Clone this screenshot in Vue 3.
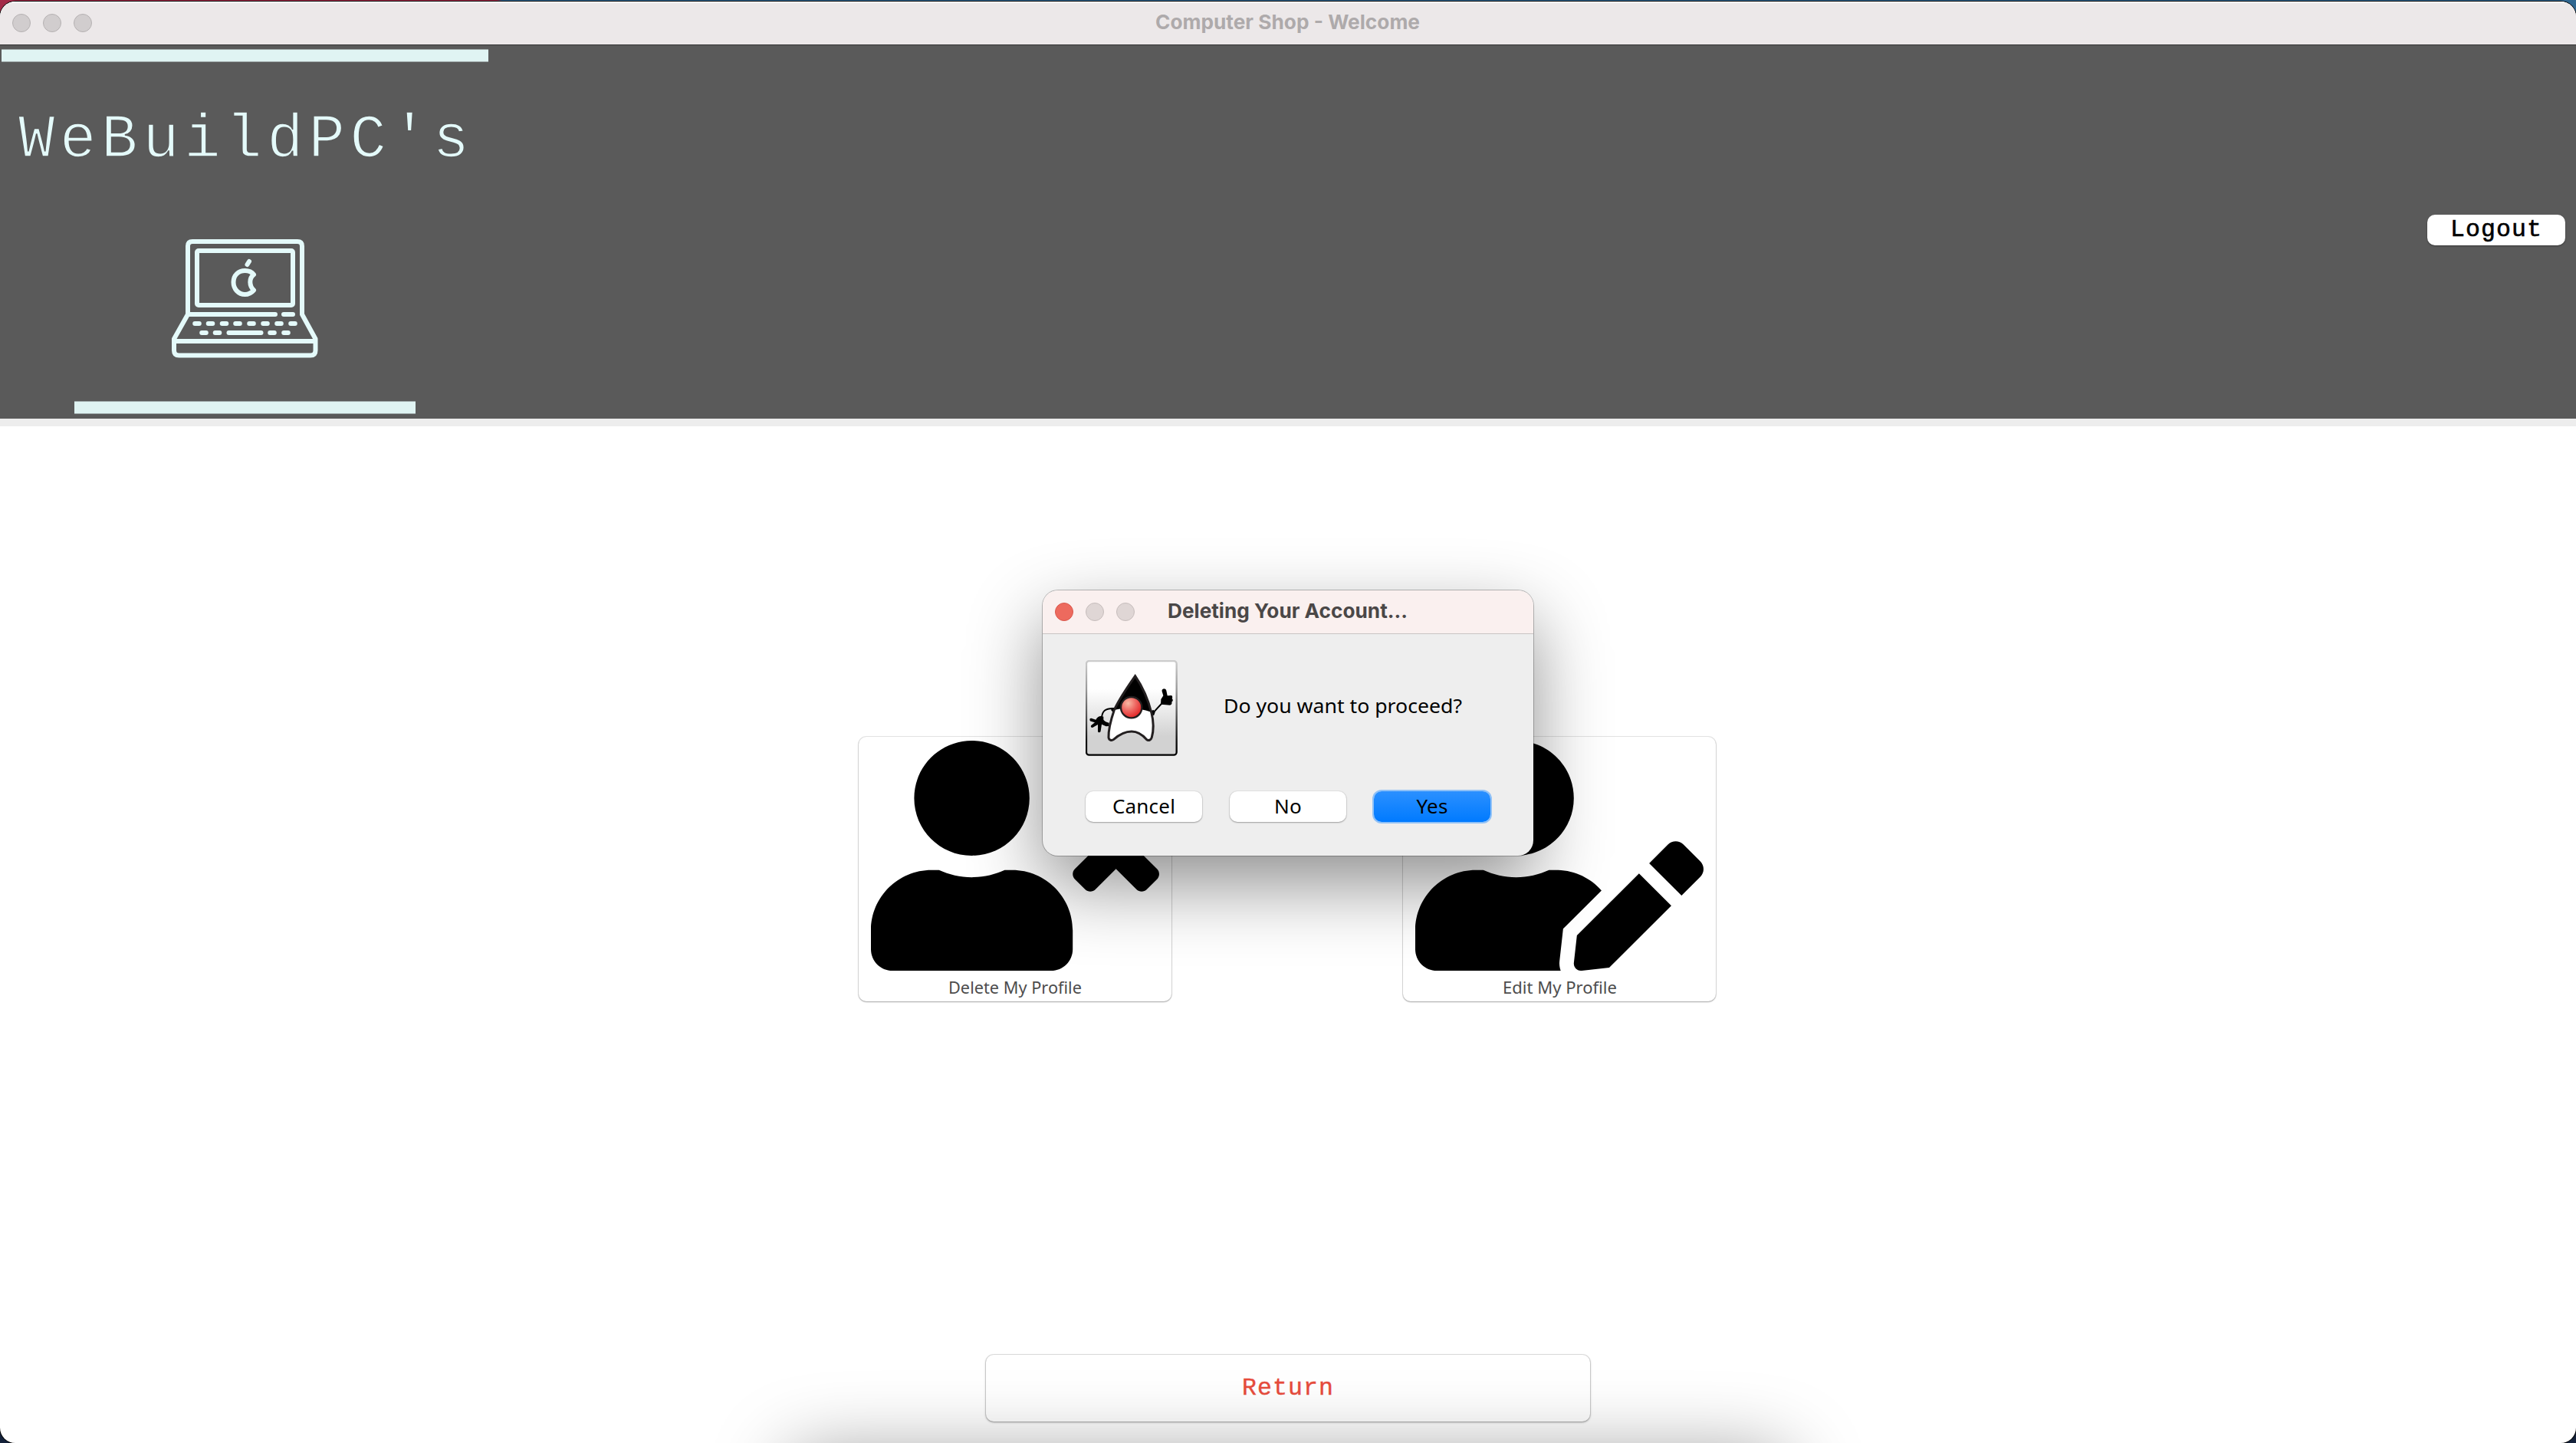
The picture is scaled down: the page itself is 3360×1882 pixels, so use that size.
<script setup>
const keysA = [257, 274.5, 292.5, 310, 328, 346, 364, 382]
const keysB = [266, 283.5, 355, 373]
const person = 'M224 256c70.7 0 128-57.3 128-128S294.7 0 224 0 96 57.3 96 128s57.3 128 128 128z'
const cards = [
  {
    label: 'Delete My Profile',
    width: 174,
    path: person + 'm89.6 32h-16.7c-22.2 10.2-46.9 16-72.9 16s-50.6-5.8-72.9-16h-16.7C60.2 288 0 348.2 0 422.4V464c0 26.5 21.5 48 48 48h352c26.5 0 48-21.5 48-48v-41.6c0-74.2-60.2-134.4-134.4-134.4zM589.6 240l45.6 45.6c6.3 6.3 6.3 16.5 0 22.8l-22.8 22.8c-6.3 6.3-16.5 6.3-22.8 0L544 285.6l-45.6 45.6c-6.3 6.3-16.5 6.3-22.8 0l-22.8-22.8c-6.3-6.3-6.3-16.5 0-22.8l45.6-45.6-45.6-45.6c-6.3-6.3-6.3-16.5 0-22.8l22.8-22.8c6.3-6.3 16.5-6.3 22.8 0l45.6 45.6 45.6-45.6c6.3-6.3 16.5-6.3 22.8 0l22.8 22.8c6.3 6.3 6.3 16.5 0 22.8z'
  },
  {
    label: 'Edit My Profile',
    width: 149,
    path: person + 'm89.6 32h-16.7c-22.2 10.2-46.9 16-72.9 16s-50.6-5.8-72.9-16h-16.7C60.2 288 0 348.2 0 422.4V464c0 26.5 21.5 48 48 48h274.9c-2.4-6.8-3.4-14-2.6-21.3l6.8-60.9 1.2-11.1 7.9-7.9 77.3-77.3c-24.5-27.7-60-45.5-99.9-45.5zm45.3 145.3l-6.8 61c-1.1 10.2 7.5 18.8 17.6 17.6l60.9-6.8 137.9-137.9-71.7-71.7-137.9 137.8zM633 268.9L595.1 231c-9.3-9.3-24.5-9.3-33.8 0l-37.8 37.8-4.1 4.1 71.8 71.7 41.8-41.8c9.3-9.4 9.3-24.5 0-33.9z'
  }
]
</script>

<template>
  <div class="desktop">
    <div class="window">
      <div class="titlebar main-title">
        <div class="lights"><i></i><i></i><i></i></div>
        <svg class="fit" width="346" height="40"><text x="0" y="27" textLength="345" lengthAdjust="spacingAndGlyphs">Computer Shop - Welcome</text></svg>
      </div>
      <header class="banner">
        <svg class="logo" width="640" height="488" viewBox="0 59 640 488">
          <rect x="2" y="64.5" width="635" height="16" fill="#e0f4f3" />
          <rect x="97" y="523.5" width="445" height="16" fill="#e0f4f3" />
          <text class="brand" x="24" y="204" textLength="588" lengthAdjust="spacing">WeBuildPC's</text>
          <g fill="none" stroke="#e4fafa" stroke-width="6" stroke-linecap="round" stroke-linejoin="round">
            <path d="M245 410V321Q245 315 251 315H388Q394 315 394 321V410L411.500 442V457Q411.500 463.500 405 463.500H233.500Q227 463.500 227 457V442Z" stroke-linecap="butt" />
            <rect x="257" y="327" width="125" height="71" rx="2" />
            <path d="M245 410H359M370 410H382M228 445H411M298.500 434H340.500" />
            <path v-for="x in keysA" :key="'a' + x" :d="`M${x - 2.800} 422h5.600`" />
            <path v-for="x in keysB" :key="'b' + x" :d="`M${x - 2.800} 434h5.600`" />
            <path d="M331 358C328 354 324 353 319.500 353C311 353 304.500 359 304.500 368C304.500 377 311 384 319.500 384C324 384 328 382 331 378.500C325 373 324.500 363 331 358Z" />
            <path d="M325 341L322.500 345" />
          </g>
        </svg>
        <button class="logout">Logout</button>
      </header>
      <div class="strip"></div>
      <main class="content">
        <div class="cards">
          <div v-for="c in cards" :key="c.label" class="card">
            <svg class="glyph" width="376" height="300" viewBox="0 0 640 512" preserveAspectRatio="none"><path :d="c.path" /></svg>
            <svg class="fit label" :width="c.width" height="32"><text x="0" y="27" :textLength="c.width" lengthAdjust="spacingAndGlyphs">{{ c.label }}</text></svg>
          </div>
        </div>
        <button class="return">Return</button>
      </main>
      <div class="bottom-shade"><div></div></div>

      <section class="dialog">
        <div class="titlebar dialog-title">
          <div class="lights"><i class="close"></i><i></i><i></i></div>
          <svg class="fit" width="314" height="40"><text x="0" y="27" textLength="313" lengthAdjust="spacingAndGlyphs">Deleting Your Account...</text></svg>
        </div>
        <div class="dialog-body">
          <div class="message">
            <svg class="duke" width="120" height="126" viewBox="48 63 360 378">
              <defs>
                <linearGradient id="tile" x1="0" y1="0" x2="0" y2="1"><stop offset=".3" stop-color="#fff" /><stop offset=".8" stop-color="#d2d2d2" /></linearGradient>
                <linearGradient id="rim" x1="0" y1="0" x2="0" y2="1"><stop offset="0" stop-color="#ccc" /><stop offset=".3" stop-color="#999" /><stop offset=".85" stop-color="#111" /><stop offset="1" stop-color="#000" /></linearGradient>
                <radialGradient id="nose" cx=".35" cy=".3" r=".75"><stop offset="0" stop-color="#f8b9a4" /><stop offset=".5" stop-color="#ee6560" /><stop offset="1" stop-color="#e01f20" /></radialGradient>
              </defs>
              <rect x="51" y="66" width="353" height="368" rx="11" fill="url(#tile)" stroke="url(#rim)" stroke-width="7" />
              <path d="M157 252C125 251 112 262 111 290M313 268L350 228" fill="none" stroke="#000" stroke-width="6" />
              <path d="M148 249h14l-4 22-10-12zM300 262l14-4 6 8-4 12-12 4z" />
              <path d="M118 284C105 278 94 284 88 296L70 290C63 289 62 300 69 302L84 307L70 318C65 324 73 330 79 325L96 315L96 341C97 348 107 347 107 340L111 314L128 322L140 321V308C128 306 120 300 118 296Z" />
              <path d="M342 236L343 216L352 202L347 185C344 174 361 171 364 182L368 202L384 201C389 204 388 211 386 213C391 217 390 224 385 226C387 232 384 239 378 239L362 238Z" />
              <path d="M242 123C212 168 176 222 160 258C145 302 137 340 138 366C140 377 150 379 158 373C182 352 202 342 228 342C252 342 268 352 286 373C294 380 304 376 307 365C315 335 314 302 306 270C292 214 266 160 242 123Z" fill="#fff" />
              <path d="M242 123C212 168 176 222 160 258C205 248 255 248 305 266C290 214 266 160 242 123Z" />
              <path d="M242 125C212 168 176 222 160 258C145 302 137 340 138 366C140 377 150 379 158 373C182 352 202 342 228 342C252 342 268 352 286 373C294 380 304 376 307 365C315 335 314 302 306 270C292 214 266 160 242 125Z" fill="none" stroke="#231f20" stroke-width="9" />
              <circle cx="227" cy="248" r="41" fill="url(#nose)" stroke="#231f20" stroke-width="7" />
            </svg>
            <svg class="fit question" width="312" height="40"><text x="-1" y="28" textLength="311" lengthAdjust="spacingAndGlyphs">Do you want to proceed?</text></svg>
          </div>
          <div class="actions">
            <button>Cancel</button>
            <button>No</button>
            <button class="primary">Yes</button>
          </div>
        </div>
      </section>
    </div>
  </div>
</template>

<style>
body { margin: 0; }
</style>

<style scoped>
.desktop {
  width: 3360px;
  height: 1882px;
  padding-top: 2px;
  box-sizing: border-box;
  overflow: hidden;
  background: linear-gradient(90deg, #a32a48 0 648px, #2f6690 655px) top / 100% 40px no-repeat, #14213a;
}
.window {
  position: relative;
  height: 1880px;
  display: flex;
  flex-direction: column;
  border-radius: 20px;
  overflow: hidden;
  background: #fff;
  box-shadow: 0 0 0 1px #000;
}
.titlebar { display: flex; justify-content: center; position: relative; box-sizing: border-box; flex: none; }
.main-title { height: 57px; background: #ece8e9; border-bottom: 1px solid #333; box-shadow: inset 0 2px #fff; }
.lights { position: absolute; left: 16px; top: 16px; display: flex; gap: 16px; }
.lights i { width: 24px; height: 24px; border-radius: 50%; box-sizing: border-box; background: #d1cdce; border: 1px solid #b5b1b2; }
.fit { display: block; overflow: visible; }
.main-title .fit, .dialog-title .fit { font: 700 26px Inter, sans-serif; }
.main-title .fit { fill: #aeaaab; margin-top: 9px; }
.banner {
  height: 487px;
  flex: none;
  display: flex;
  justify-content: space-between;
  align-items: center;
  background: #5a5a5a;
  padding-right: 14px;
}
.logo { display: block; }
.brand {
  font-family: "Liberation Mono", monospace;
  font-size: 79px;
  fill: #e4fafa;
  stroke: #5a5a5a;
  stroke-width: 1.6px;
}
button { border: 0; padding: 0; margin: 0; background: #fff; color: #000; }
.logout {
  width: 180px;
  height: 40px;
  margin-bottom: 6px;
  border-radius: 10px;
  font: 31.500px/37px "Liberation Mono", monospace;
  letter-spacing: 1.1px;
  -webkit-text-stroke: .6px #000;
  box-shadow: 0 1px 2px rgba(0, 0, 0, .4);
}
.strip { height: 10px; background: #ededed; flex: none; }
.content { flex: 1; display: flex; flex-direction: column; align-items: center; }
.cards { display: flex; gap: 302px; margin: 405px 2px 0 0; }
.card {
  width: 408px;
  height: 345px;
  box-sizing: border-box;
  border-radius: 10px;
  background: #fff;
  padding-top: 5px;
  box-shadow: 0 0 0 1px rgba(0, 0, 0, .1), 0 1px 2px rgba(0, 0, 0, .28);
  display: flex;
  flex-direction: column;
  align-items: center;
}
.glyph { display: block; }
.label { font: 22.500px "Noto Sans", sans-serif; fill: #4d4d4d; margin-top: 3px; }
.return {
  width: 788px;
  height: 87px;
  margin-top: 461px;
  border-radius: 10px;
  color: #e74c3c;
  font: 31.500px/86px "Liberation Mono", monospace;
  letter-spacing: 1.1px;
  -webkit-text-stroke: .4px #e74c3c;
  box-shadow: 0 0 0 1px rgba(0, 0, 0, .1), 0 1px 3px rgba(0, 0, 0, .35);
}
.bottom-shade { position: absolute; inset: auto 0 0 0; height: 160px; overflow: hidden; pointer-events: none; }
.bottom-shade div {
  width: 1300px;
  height: 300px;
  margin: 176px auto 0;
  border-radius: 20px;
  box-shadow: 0 0 100px rgba(0, 0, 0, .4);
}
.dialog {
  position: absolute;
  left: 1360px;
  top: 768px;
  width: 640px;
  height: 346px;
  border-radius: 20px;
  background: #eee;
  box-shadow: 0 0 0 1px rgba(0, 0, 0, .25), 0 38px 96px rgba(0, 0, 0, .44);
}
.dialog-title { height: 57px; border-radius: 20px 20px 0 0; background: #faf0ef; border-bottom: 1px solid #c9c5c4; }
.dialog-title .fit { fill: #4a4747; margin-top: 9px; }
.dialog-title .lights i { background: #dfd6d5; border-color: #c6bdbc; }
.dialog-title .lights i.close { background: #ed6a5e; border-color: #d9574c; }
.dialog-body { padding: 34px 55px 0 56px; }
.message { display: flex; gap: 61px; }
.duke { display: block; }
.question { font: 26px "Noto Sans", sans-serif; margin-top: 41px; }
.actions { display: flex; gap: 36px; margin-top: 45px; }
.actions button {
  width: 152px;
  height: 40px;
  box-sizing: border-box;
  padding-bottom: 3px;
  border-radius: 10px;
  font: 26px/36px "Noto Sans", sans-serif;
  letter-spacing: .2px;
  box-shadow: 0 0 0 1px rgba(0, 0, 0, .05), 0 1px 2px rgba(0, 0, 0, .3);
}
.actions .primary { background: linear-gradient(#2b90ff, #007aff); box-shadow: 0 0 0 2px #8fc1f7; }
</style>
